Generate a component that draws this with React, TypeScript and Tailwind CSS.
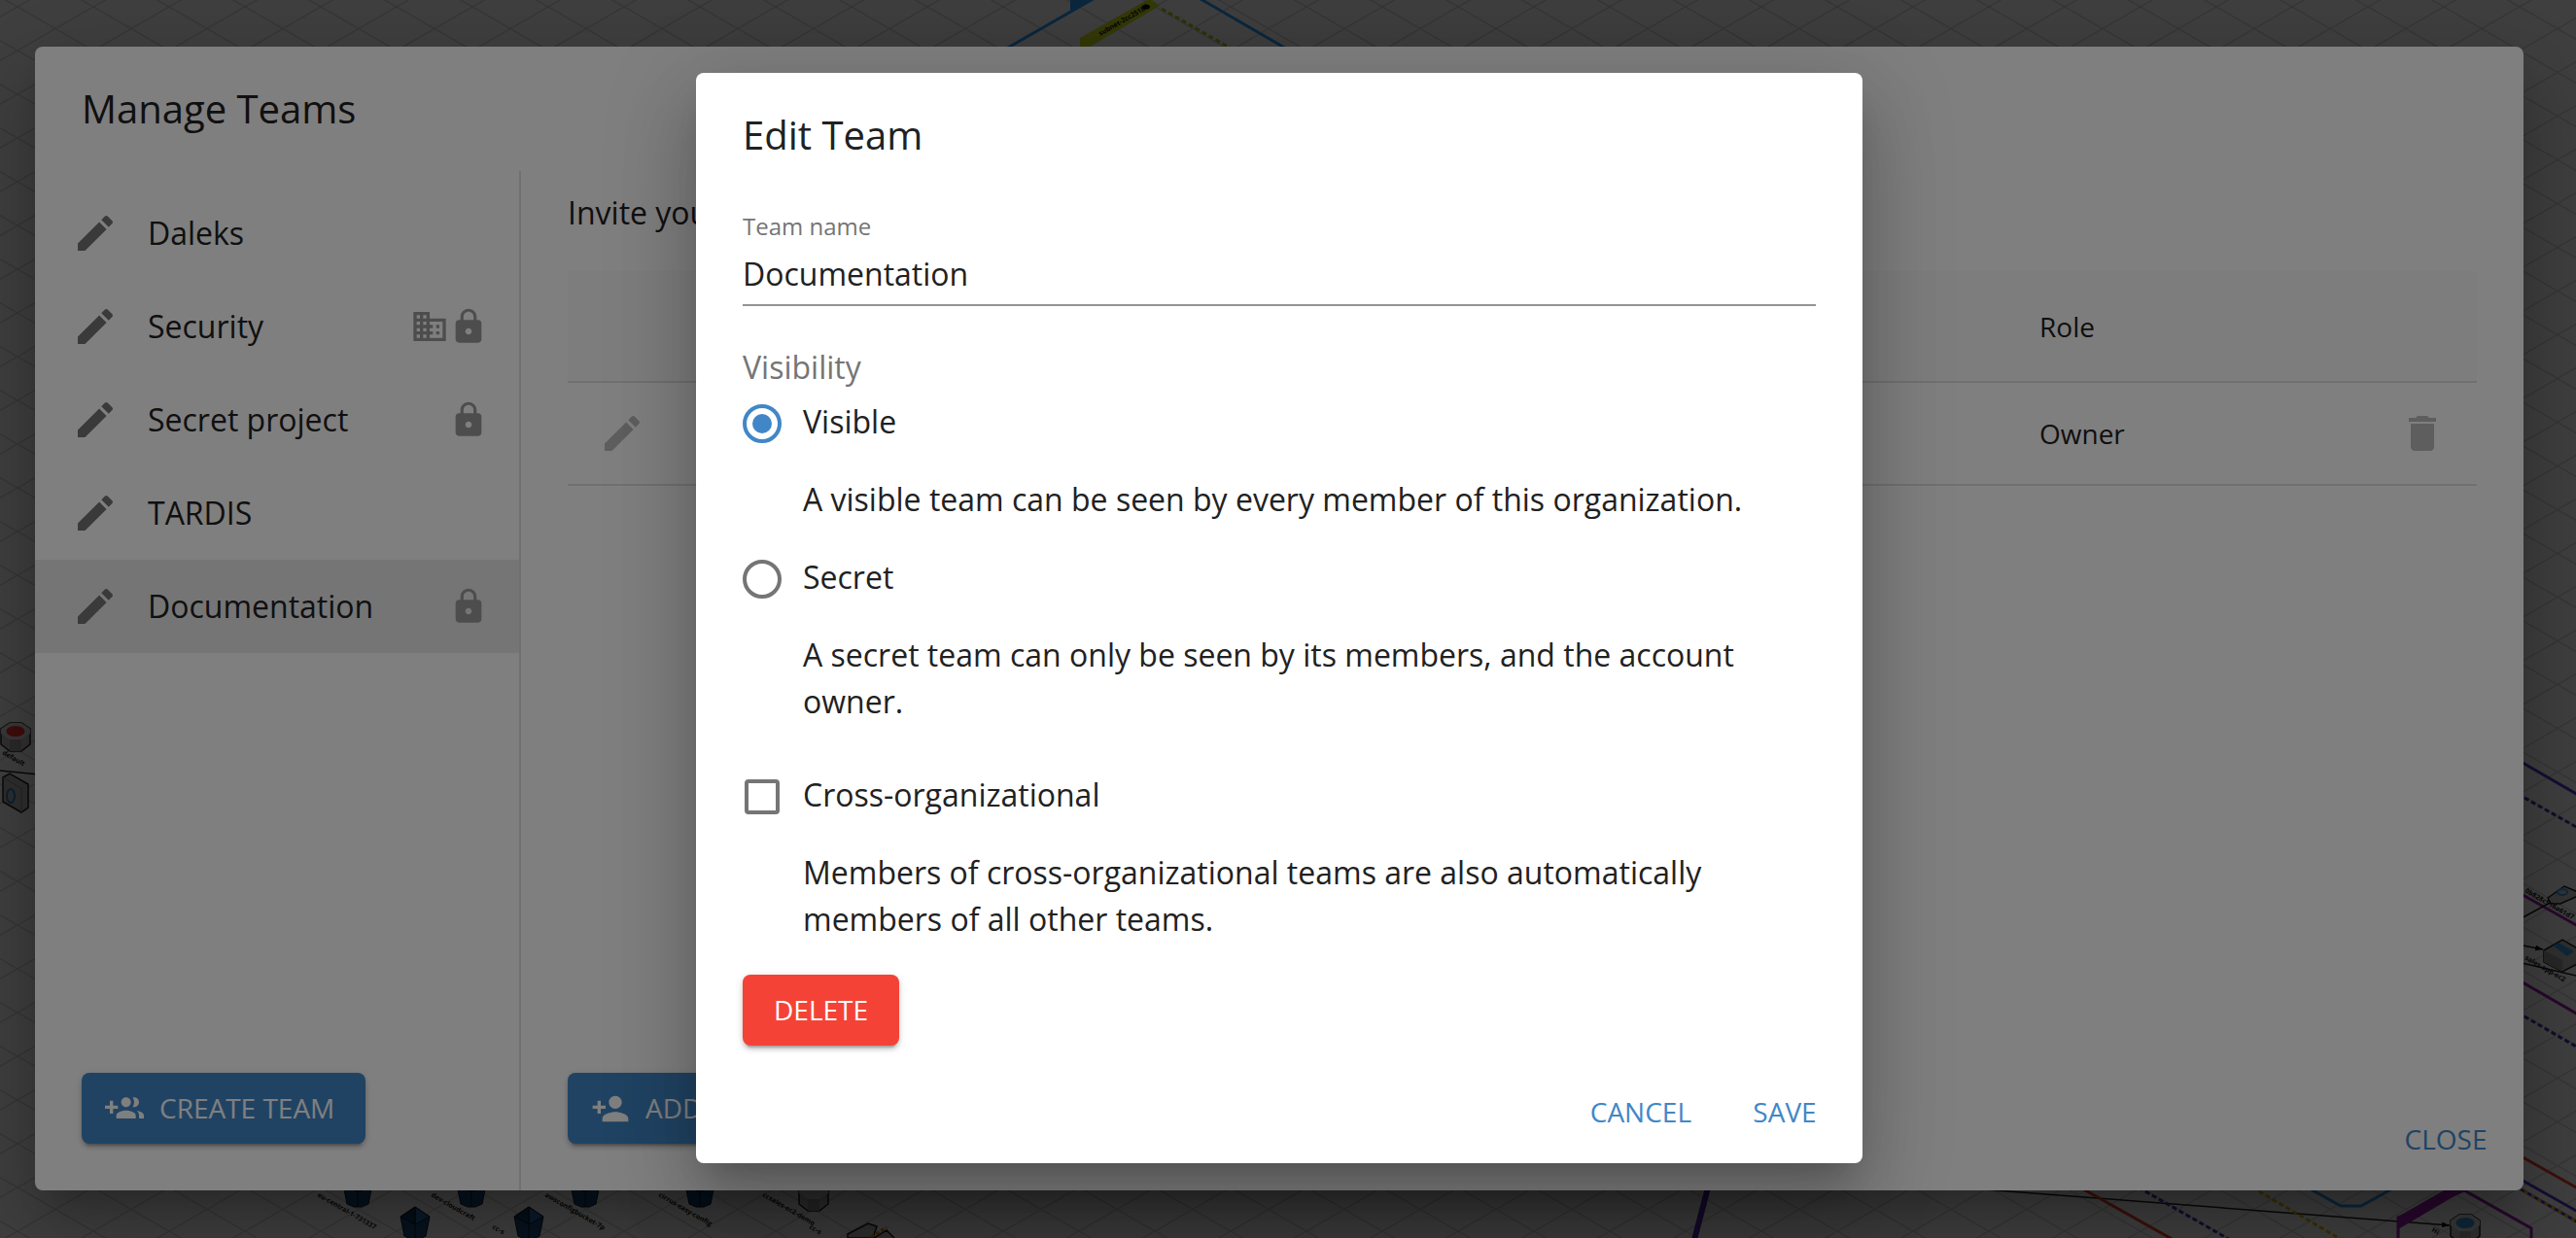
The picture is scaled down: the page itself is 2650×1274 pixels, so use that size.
import React, { useState } from "react";

const ICONS = {
  edit: "M3 17.25V21h3.75L17.81 9.94l-3.75-3.75L3 17.25zM20.71 7.04c.39-.39.39-1.02 0-1.41l-2.34-2.34c-.39-.39-1.02-.39-1.41 0l-1.83 1.83 3.75 3.75 1.83-1.83z",
  lock: "M18 8h-1V6c0-2.76-2.24-5-5-5S7 3.24 7 6v2H6c-1.1 0-2 .9-2 2v10c0 1.1.9 2 2 2h12c1.1 0 2-.9 2-2V10c0-1.1-.9-2-2-2zm-6 9c-1.1 0-2-.9-2-2s.9-2 2-2 2 .9 2 2-.9 2-2 2zm3.1-9H8.9V6c0-1.71 1.39-3.1 3.1-3.1 1.71 0 3.1 1.39 3.1 3.1v2z",
  domain:
    "M12 7V3H2v18h20V7H12zM6 19H4v-2h2v2zm0-4H4v-2h2v2zm0-4H4V9h2v2zm0-4H4V5h2v2zm4 12H8v-2h2v2zm0-4H8v-2h2v2zm0-4H8V9h2v2zm0-4H8V5h2v2zm10 12h-8v-2h2v-2h-2v-2h2v-2h-2V9h8v10zm-2-8h-2v2h2v-2zm0 4h-2v2h2v-2z",
  trash: "M6 19c0 1.1.9 2 2 2h8c1.1 0 2-.9 2-2V7H6v12zM19 4h-3.5l-1-1h-5l-1 1H5v2h14V4z",
  groupAdd:
    "M8 10H5V7H3v3H0v2h3v3h2v-3h3v-2zm10 1c1.66 0 2.99-1.34 2.99-3S19.66 5 18 5c-.32 0-.63.05-.91.14.57.81.9 1.79.9 2.86s-.34 2.04-.9 2.86c.28.09.59.14.91.14zm-5 0c1.66 0 2.99-1.34 2.99-3S14.66 5 13 5c-1.66 0-3 1.34-3 3s1.34 3 3 3zm6.62 2.16c.83.73 1.38 1.66 1.38 2.84v2h3v-2c0-1.54-2.37-2.49-4.38-2.84zM13 13c-2 0-6 1-6 3v2h12v-2c0-2-4-3-6-3z",
  personAdd:
    "M15 12c2.21 0 4-1.79 4-4s-1.79-4-4-4-4 1.79-4 4 1.79 4 4 4zm-9-2V7H4v3H1v2h3v3h2v-3h3v-2H6zm9 4c-2.67 0-8 1.34-8 4v2h16v-2c0-2.66-5.33-4-8-4z",
};

function Icon({ name, className }: { name: keyof typeof ICONS; className: string }) {
  return (
    <svg viewBox="0 0 24 24" fill="currentColor" aria-hidden="true" className={`shrink-0 ${className}`}>
      <path d={ICONS[name]} />
    </svg>
  );
}

type Team = { name: string; crossOrg?: boolean; secret?: boolean };

const TEAMS: Team[] = [
  { name: "Daleks" },
  { name: "Security", crossOrg: true, secret: true },
  { name: "Secret project", secret: true },
  { name: "TARDIS" },
  { name: "Documentation", secret: true },
];

function Label({ x, y, angle, children }: { x: number; y: number; angle: number; children: string }) {
  return (
    <text transform={`translate(${x} ${y}) rotate(${angle})`} fontSize="7" fontWeight="bold" fontFamily="Open Sans, sans-serif" fill="#111">
      {children}
    </text>
  );
}

function Crystal({ x, y }: { x: number; y: number }) {
  return (
    <g transform={`translate(${x} ${y})`} stroke="#101820" strokeWidth="1">
      <path d="M0 0L15 10L11 30L4 33H-4L-11 30L-15 10Z" fill="#1c4f80" />
      <path d="M0 0L15 10L0 18Z" fill="#2a6ba8" />
      <path d="M0 0L-15 10L0 18Z" fill="#123a60" />
      <path d="M0 18V33" />
    </g>
  );
}

function Prism({ x, y, cap }: { x: number; y: number; cap?: string }) {
  return (
    <g transform={`translate(${x} ${y})`}>
      <path d="M-6 0H6L15 6V22L6 29H-6L-15 22V6Z" fill="#c4c4c4" stroke="#222" strokeWidth="1.500" />
      <path d="M-6 0H6L15 6V11L6 17H-6L-15 11V6Z" fill="#e4e4e4" />
      <path d="M-6 17H6V29H-6Z" fill="#a9a9a9" />
      {cap && <ellipse cx="0" cy="8.500" rx="9.500" ry="5.500" fill={cap} />}
    </g>
  );
}

function DiagramCanvas() {
  return (
    <svg
      viewBox="0 0 2650 1274"
      preserveAspectRatio="xMidYMid slice"
      aria-hidden="true"
      className="absolute inset-0 h-full w-full"
    >
      <defs>
        <pattern id="iso" width="78" height="45" patternUnits="userSpaceOnUse" x="18" y="7">
          <path d="M0 0L78 45M0 45L78 0" stroke="#dadada" strokeWidth="1.500" />
        </pattern>
        <marker id="tip" viewBox="0 0 8 6" refX="8" refY="3" markerWidth="8" markerHeight="6" markerUnits="userSpaceOnUse" orient="auto">
          <path d="M0 0L8 3L0 6Z" fill="#111" />
        </marker>
      </defs>
      <rect width="2650" height="1274" fill="url(#iso)" />

      <g fill="none" strokeWidth="3">
        <path d="M1030 53L1126 -2M1230 -4L1330 54" stroke="#2aa0ff" />
        <path d="M1195 9L1272 53" stroke="#b8cc20" strokeDasharray="5 3" />
      </g>
      <path d="M1101 0V13L1125 0Z" fill="#2aa0ff" />
      <path d="M1111 50V39L1180 0H1185L1193 6L1118 50Z" fill="#d4e824" />
      <ellipse cx="1179" cy="7" rx="4" ry="2.500" fill="#111" />
      <Label x={1132} y={37} angle={-30}>subnet-2cc25182</Label>

      <Prism x={16} y={744} cap="#ff3232" />
      <Label x={2} y={776} angle={30}>default</Label>
      <path d="M0 793L40 797" stroke="#222" strokeWidth="1.500" />
      <path d="M3 800L10 796L29 807V831L22 836L3 825Z" fill="#bdbdbd" stroke="#222" strokeWidth="1.500" />
      <path d="M3 800L22 811V836" fill="none" stroke="#8a8a8a" />
      <ellipse cx="11" cy="819" rx="4" ry="7" fill="none" stroke="#2a80c4" strokeWidth="2" />

      <Crystal x={368} y={1209} />
      <Crystal x={485} y={1209} />
      <Crystal x={602} y={1209} />
      <Crystal x={720} y={1209} />
      <Crystal x={427} y={1242} />
      <Crystal x={544} y={1242} />
      <Label x={326} y={1231} angle={30}>eu-central-1-731337</Label>
      <Label x={443} y={1231} angle={30}>dev-cloudcraft</Label>
      <Label x={506} y={1264} angle={30}>cc-s</Label>
      <Label x={560} y={1231} angle={30}>awsconfigbucket-7p</Label>
      <Label x={677} y={1231} angle={30}>cirrus-easy-config</Label>
      <Label x={784} y={1231} angle={30}>ccsales-ec2-demo</Label>
      <Label x={832} y={1264} angle={30}>cc-s</Label>
      <Prism x={837} y={1217} />
      <path d="M872 1270L893 1259L902 1262L898 1274H872ZM899 1274L912 1266L920 1274" fill="#c4c4c4" stroke="#222" strokeWidth="1.500" />
      <path d="M896 1273L912 1263" stroke="#e09020" strokeWidth="3" strokeDasharray="4 2" />

      <path d="M1757 1222L1743 1276" stroke="#5a2ab4" strokeWidth="6" />
      <path d="M2040 1224L2520 1261" stroke="#222" strokeWidth="1.500" markerEnd="url(#tip)" />
      <g fill="none" strokeWidth="3">
        <path d="M2140 1222L2236 1276M2590 1188L2652 1223" stroke="#f0402c" />
        <path d="M2200 1222L2296 1277" stroke="#3a3ab8" strokeDasharray="5 3" />
        <path d="M2317 1222L2411 1277" stroke="#e8c000" strokeDasharray="5 3" />
        <path d="M2372 1221L2408 1241H2429L2465 1221" stroke="#2aa0ff" />
        <path d="M2467 1280V1253L2535 1225L2604 1264V1280" stroke="#a020b4" />
        <path d="M2590 1212L2652 1247" stroke="#5a34d0" />
        <path d="M2590 1222L2652 1258" stroke="#5a34d0" />
        <path d="M2590 1222L2652 1258" stroke="#e8c000" strokeDasharray="4 4" />
        <path d="M2590 782L2652 818" stroke="#5a34d0" />
        <path d="M2590 817L2652 852M2590 1042L2652 1078" stroke="#3a3ab8" strokeDasharray="5 3" />
        <path d="M2590 918L2652 953M2590 1008L2652 1044" stroke="#a020b4" />
      </g>
      <path d="M2467 1252L2514 1225H2535L2467 1265Z" fill="#a020b4" />
      <Prism x={2536} y={1250} cap="#3a9ee8" />
      <Label x={2501} y={1267} angle={30}>Hi</Label>

      <path d="M2590 947L2625 928M2590 990L2650 1004" stroke="#222" strokeWidth="1.500" />
      <path d="M2590 972L2616 977" stroke="#222" strokeWidth="1.500" markerEnd="url(#tip)" />
      <path d="M2621 924L2638 912L2652 918V922L2634 930H2624Z" fill="#d0d0d0" stroke="#222" strokeWidth="1.500" />
      <ellipse cx="2636" cy="918" rx="5" ry="3" fill="none" stroke="#3a9ee8" strokeWidth="2" />
      <path d="M2617 978L2636 967L2655 978V990L2636 1000L2617 990Z" fill="#c4c4c4" stroke="#222" strokeWidth="1.500" />
      <path d="M2617 978L2636 988V1000L2617 990Z" fill="#a0a0a0" />
      <path d="M2626 973L2632 970L2648 979L2641 984Z" fill="#3a9ee8" />
      <Label x={2597} y={918} angle={30}>0b828c516a61d7</Label>
      <Label x={2597} y={987} angle={30}>sales-app-ec2</Label>
    </svg>
  );
}

const ELEVATED =
  "shadow-[0px_22px_30px_-14px_rgba(0,0,0,0.2),0px_48px_76px_6px_rgba(0,0,0,0.14),0px_18px_92px_16px_rgba(0,0,0,0.12)]";
const CONTAINED =
  "inline-flex items-center rounded-lg px-8 py-3 text-[28px] leading-[49px] uppercase text-white shadow-[0px_6px_2px_-4px_rgba(0,0,0,0.2),0px_4px_4px_0px_rgba(0,0,0,0.14),0px_2px_10px_0px_rgba(0,0,0,0.12)]";
const TEXT_BUTTON =
  "min-w-32 rounded-lg px-4 py-3 text-center text-[28px] leading-[49px] uppercase text-[#4187c7]";

function TeamList() {
  return (
    <nav aria-label="Teams" className="flex w-[500px] shrink-0 flex-col justify-between border-r-2 border-[#e0e0e0] pt-4 pb-12">
      <ul>
        {TEAMS.map((team) => (
          <li
            key={team.name}
            className={`flex h-24 items-center pr-8 pl-[38px] ${team.name === "Documentation" ? "bg-[#ebebeb]" : ""}`}
          >
            <button type="button" aria-label={`Edit ${team.name}`} className="mr-[30px] text-[#757575]">
              <Icon name="edit" className="size-12" />
            </button>
            <a href="#" className="grow text-[32px] leading-[48px]">
              {team.name}
            </a>
            {team.crossOrg && <Icon name="domain" className="size-10 text-[#9a9a9a]" />}
            {team.secret && <Icon name="lock" className="size-10 text-[#9a9a9a]" />}
          </li>
        ))}
      </ul>
      <div className="px-12">
        <button type="button" className={`${CONTAINED} bg-[#4187c7]`}>
          <Icon name="groupAdd" className="mr-4 -ml-2 size-10" />
          Create team
        </button>
      </div>
    </nav>
  );
}

function MembersPanel() {
  return (
    <section className="flex min-w-0 grow flex-col justify-between pt-[19px]">
      <div className="px-12">
        <p className="mb-9 text-[32px] leading-[48px]">Invite your colleagues to join this team.</p>
        <table className="w-full table-fixed text-left text-[28px] leading-10">
          <colgroup>
            <col className="w-28" />
            <col />
            <col className="w-[370px]" />
            <col className="w-28" />
          </colgroup>
          <thead>
            <tr className="h-[114px] border-b-2 border-[#e0e0e0] bg-[#fafafa]">
              <td />
              <td />
              <th scope="col" className="px-8 font-normal">
                Role
              </th>
              <td />
            </tr>
          </thead>
          <tbody>
            <tr className="h-[106px] border-b-2 border-[#e0e0e0]">
              <td className="px-8 align-middle">
                <button type="button" disabled aria-label="Edit member" className="block text-[#bdbdbd]">
                  <Icon name="edit" className="size-12" />
                </button>
              </td>
              <td />
              <td className="px-8 align-middle">Owner</td>
              <td className="px-8 align-middle">
                <button type="button" disabled aria-label="Remove member" className="block text-[#bdbdbd]">
                  <Icon name="trash" className="size-12" />
                </button>
              </td>
            </tr>
          </tbody>
        </table>
      </div>
      <div className="flex items-end justify-between pr-4 pb-4 pl-12">
        <button type="button" className={`${CONTAINED} mb-8 bg-[#4187c7]`}>
          <Icon name="personAdd" className="mr-4 -ml-2 size-10" />
          Add member
        </button>
        <button type="button" className={TEXT_BUTTON}>
          Close
        </button>
      </div>
    </section>
  );
}

function ManageTeamsDialog() {
  return (
    <div className="absolute inset-0 flex justify-center bg-black/50 pt-12 pr-[18px] pb-[49px]">
      <div className={`flex w-full max-w-[2560px] flex-col rounded-lg bg-white ${ELEVATED}`}>
        <h2 className="px-12 py-8 text-[40px] leading-[64px]">Manage Teams</h2>
        <div className="flex grow">
          <TeamList />
          <MembersPanel />
        </div>
      </div>
    </div>
  );
}

const RADIO =
  "mt-1.5 mr-[22px] size-10 shrink-0 appearance-none rounded-full border-4 border-[#757575] bg-clip-content p-1.5 checked:border-[#4187c7] checked:bg-[#4187c7]";

function EditTeamDialog() {
  const [name, setName] = useState("Documentation");
  const [visibility, setVisibility] = useState("visible");
  const [crossOrg, setCrossOrg] = useState(false);

  return (
    <div className="absolute inset-0 flex items-center justify-center bg-black/50 pr-[18px] pb-0.5">
      <form
        role="dialog"
        aria-labelledby="edit-title"
        onSubmit={(event) => event.preventDefault()}
        className={`w-full max-w-[1200px] rounded-lg bg-white ${ELEVATED}`}
      >
        <h2 id="edit-title" className="px-12 py-8 text-[40px] leading-[64px]">
          Edit Team
        </h2>
        <div className="px-12 pt-3.5 pb-4 text-[32px] leading-[48px]">
          <label htmlFor="team-name" className="block text-2xl leading-8 text-[#757575]">
            Team name
          </label>
          <input
            id="team-name"
            type="text"
            value={name}
            onChange={(event) => setName(event.target.value)}
            className="mt-2 block h-[58px] w-full border-b-2 border-[#949494] pb-2 outline-none"
          />

          <fieldset className="mt-[39px]">
            <legend className="mb-2 text-[#757575]">Visibility</legend>
            <label className="flex items-start">
              <input
                type="radio"
                name="visibility"
                checked={visibility === "visible"}
                onChange={() => setVisibility("visible")}
                className={RADIO}
              />
              Visible
            </label>
            <p className="my-8 pl-[62px]">A visible team can be seen by every member of this organization.</p>
            <label className="flex items-start">
              <input
                type="radio"
                name="visibility"
                checked={visibility === "secret"}
                onChange={() => setVisibility("secret")}
                className={RADIO}
              />
              Secret
            </label>
            <p className="mt-8 pl-[62px]">A secret team can only be seen by its members, and the account owner.</p>
          </fieldset>

          <label className="mt-12 flex items-start">
            <input
              type="checkbox"
              checked={crossOrg}
              onChange={(event) => setCrossOrg(event.target.checked)}
              className="mt-2 mr-6 ml-0.5 size-9 shrink-0 appearance-none rounded-sm border-4 border-[#757575] checked:bg-[#4187c7]"
            />
            Cross-organizational
          </label>
          <p className="mt-8 mb-[33px] pl-[62px]">
            Members of cross-organizational teams are also automatically members of all other teams.
          </p>

          <button type="button" className={`${CONTAINED} bg-[#f44336]`}>
            Delete
          </button>
        </div>
        <div className="flex justify-end gap-4 p-4">
          <button type="button" className={TEXT_BUTTON}>
            Cancel
          </button>
          <button type="submit" className={TEXT_BUTTON}>
            Save
          </button>
        </div>
      </form>
    </div>
  );
}

export default function App() {
  return (
    <div className="relative h-screen overflow-hidden bg-white font-['Open_Sans',sans-serif] text-[#212121]">
      <DiagramCanvas />
      <ManageTeamsDialog />
      <EditTeamDialog />
    </div>
  );
}
